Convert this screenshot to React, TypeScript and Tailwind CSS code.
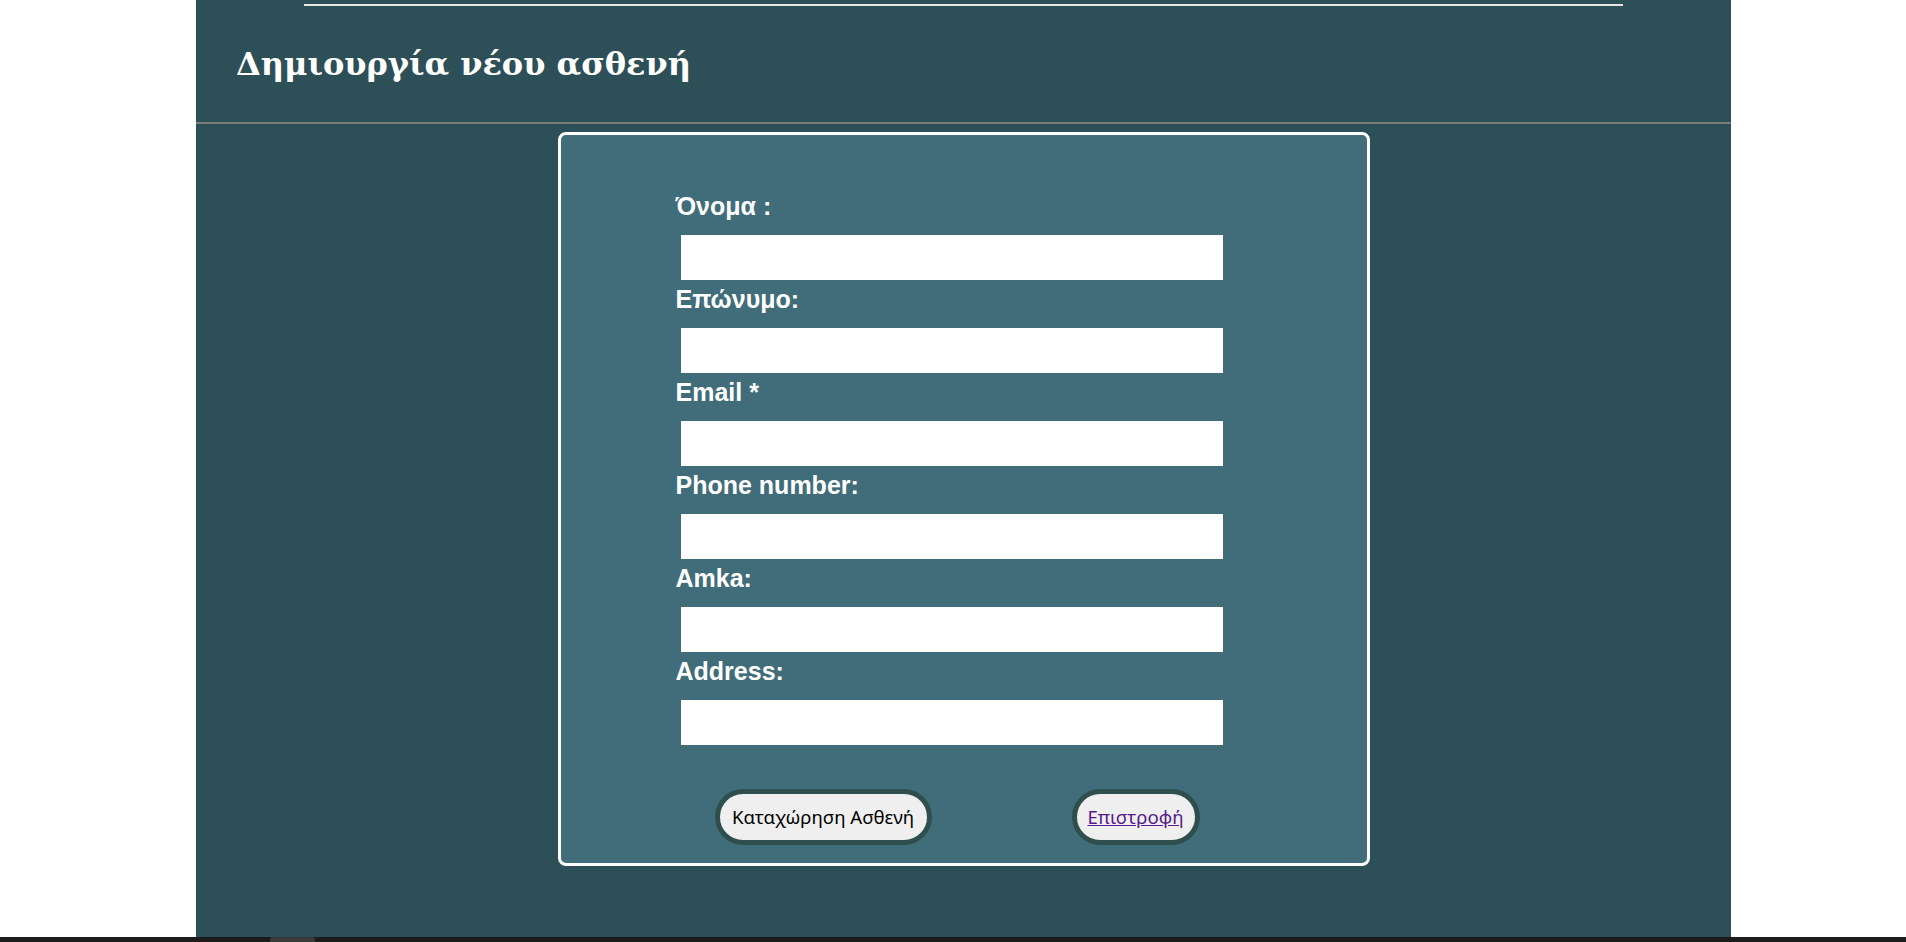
import React from "react";

const fields = ["Όνομα :", "Επώνυμο:", "Email *", "Phone number:", "Amka:", "Address:"];

export default function App() {
  return (
    <div className="flex h-[942px] w-[1906px] flex-col overflow-hidden bg-white">
      <div className="flex min-h-0 flex-1">
        <div className="ml-[196px] flex w-[1535px] flex-col bg-[#2d4f58]">
          <div className="pt-[4px]">
            <div className="mx-[108px] h-[2px] bg-[#e6e6e6]" />
          </div>
          <h1
            className="mt-[40px] mb-[39px] pl-[40px] text-[32px] leading-[37px] font-bold text-white"
            style={{ fontFamily: '"DejaVu Serif", "Liberation Serif", serif' }}
          >
            Δημιουργία νέου ασθενή
          </h1>
          <div className="h-[2px] bg-[#7b7b7b]" />
          <div className="mx-auto mt-[8px] w-[812px] rounded-[8px] border-[3px] border-white bg-[#406d79] pt-[58px] pb-[18px]">
            <form
              className="flex flex-col pl-[115px]"
              style={{ fontFamily: '"Liberation Sans", Arial, sans-serif' }}
              onSubmit={(e) => e.preventDefault()}
            >
              {fields.map((f, i) => (
                <div key={f} className={i === 0 ? "flex flex-col" : "mt-[6px] flex flex-col"}>
                  <label className="mb-[16px] h-[26px] text-[25px] leading-[26px] font-bold text-white">{f}</label>
                  <input className="ml-[5px] h-[45px] w-[542px] border-0 bg-white outline-none" type="text" />
                </div>
              ))}
            </form>
            <div
              className="mt-[44px] flex items-center pl-[154px] gap-[140px]"
              style={{ fontFamily: '"Noto Sans", "Open Sans", sans-serif' }}
            >
              <button className="flex h-[56px] w-[217px] items-center justify-center rounded-full border-[5px] border-[#2f4f4f] bg-[#efefef] text-[18.6px] text-black">
                Καταχώρηση Ασθενή
              </button>
              <div className="flex h-[56px] w-[128px] items-center justify-center rounded-full border-[5px] border-[#2f4f4f] bg-[#efefef] text-[18.6px]">
                <a href="#" className="text-[#551a8b] underline">
                  Επιστροφή
                </a>
              </div>
            </div>
          </div>
        </div>
      </div>
      <div className="relative h-[5px] bg-[#1c1c1c]">
        <div className="absolute top-0 left-[270px] h-[5px] w-[45px] rounded-t-[3px] bg-[#3a3a3a]" />
      </div>
    </div>
  );
}
